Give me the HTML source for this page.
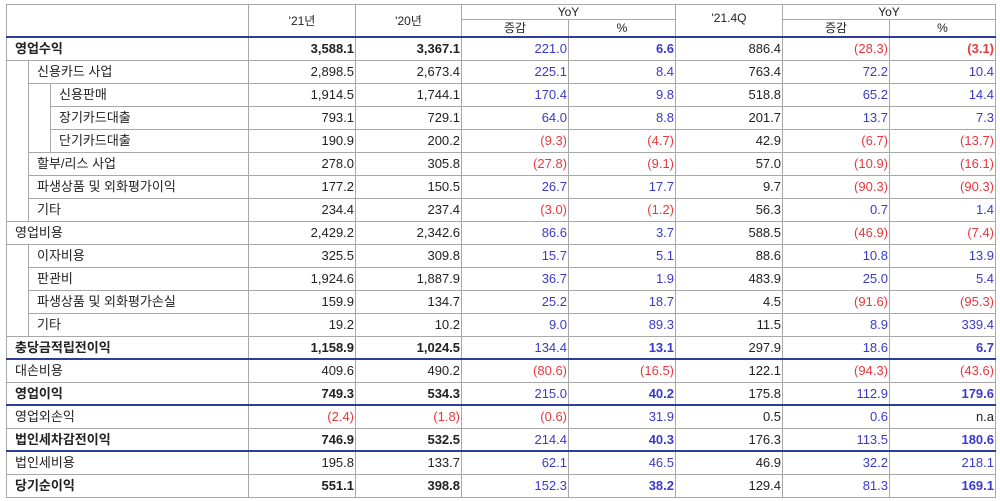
<!DOCTYPE html>
<html><head><meta charset="utf-8"><style>
body{margin:0;width:1000px;height:501px;background:#fff;font-family:"Liberation Sans","Noto Sans CJK KR",sans-serif;font-size:13px;color:#222;overflow:hidden}
table{position:absolute;left:6px;top:4px;border-collapse:collapse;table-layout:fixed;width:989px}
td{border:1px solid #a8a8a8;padding:0;height:22px;line-height:22px;white-space:nowrap;overflow:hidden}
td.n{text-align:right;padding-right:1px}
td.l{padding-left:8px}
.h td{height:14px;line-height:14px;text-align:center;font-size:12px}
.B{color:#3a3acc}.R{color:#e8383d}.b{font-weight:bold}
tr.bl td{border-bottom:2px solid #2d3d9a;height:21px;line-height:21px}
tr.h2 td{height:12px;line-height:16px;border-bottom:2px solid #2d3d9a}
</style></head><body>
<table>
<colgroup><col style="width:22px"><col style="width:22px"><col style="width:198px"><col style="width:107px"><col style="width:106px"><col style="width:107px"><col style="width:107px"><col style="width:107px"><col style="width:107px"><col style="width:106px"></colgroup>
<tr class="h"><td colspan="3" rowspan="2" style="border-bottom:2px solid #2d3d9a"></td><td rowspan="2" style="border-bottom:2px solid #2d3d9a">'21년</td><td rowspan="2" style="border-bottom:2px solid #2d3d9a">'20년</td><td colspan="2">YoY</td><td rowspan="2" style="border-bottom:2px solid #2d3d9a;vertical-align:top;padding-top:6px">'21.4Q</td><td colspan="2">YoY</td></tr>
<tr class="h h2"><td>증감</td><td>%</td><td>증감</td><td>%</td></tr>
<tr><td colspan="3" class="l b">영업수익</td><td class="n b">3,588.1</td><td class="n b">3,367.1</td><td class="n B">221.0</td><td class="n B b">6.6</td><td class="n">886.4</td><td class="n R">(28.3)</td><td class="n R b">(3.1)</td></tr>
<tr><td rowspan="7"></td><td colspan="2" class="l">신용카드 사업</td><td class="n">2,898.5</td><td class="n">2,673.4</td><td class="n B">225.1</td><td class="n B">8.4</td><td class="n">763.4</td><td class="n B">72.2</td><td class="n B">10.4</td></tr>
<tr><td rowspan="3"></td><td class="l">신용판매</td><td class="n">1,914.5</td><td class="n">1,744.1</td><td class="n B">170.4</td><td class="n B">9.8</td><td class="n">518.8</td><td class="n B">65.2</td><td class="n B">14.4</td></tr>
<tr><td class="l">장기카드대출</td><td class="n">793.1</td><td class="n">729.1</td><td class="n B">64.0</td><td class="n B">8.8</td><td class="n">201.7</td><td class="n B">13.7</td><td class="n B">7.3</td></tr>
<tr><td class="l">단기카드대출</td><td class="n">190.9</td><td class="n">200.2</td><td class="n R">(9.3)</td><td class="n R">(4.7)</td><td class="n">42.9</td><td class="n R">(6.7)</td><td class="n R">(13.7)</td></tr>
<tr><td colspan="2" class="l">할부/리스 사업</td><td class="n">278.0</td><td class="n">305.8</td><td class="n R">(27.8)</td><td class="n R">(9.1)</td><td class="n">57.0</td><td class="n R">(10.9)</td><td class="n R">(16.1)</td></tr>
<tr><td colspan="2" class="l">파생상품 및 외화평가이익</td><td class="n">177.2</td><td class="n">150.5</td><td class="n B">26.7</td><td class="n B">17.7</td><td class="n">9.7</td><td class="n R">(90.3)</td><td class="n R">(90.3)</td></tr>
<tr><td colspan="2" class="l">기타</td><td class="n">234.4</td><td class="n">237.4</td><td class="n R">(3.0)</td><td class="n R">(1.2)</td><td class="n">56.3</td><td class="n B">0.7</td><td class="n B">1.4</td></tr>
<tr><td colspan="3" class="l">영업비용</td><td class="n">2,429.2</td><td class="n">2,342.6</td><td class="n B">86.6</td><td class="n B">3.7</td><td class="n">588.5</td><td class="n R">(46.9)</td><td class="n R">(7.4)</td></tr>
<tr><td rowspan="4"></td><td colspan="2" class="l">이자비용</td><td class="n">325.5</td><td class="n">309.8</td><td class="n B">15.7</td><td class="n B">5.1</td><td class="n">88.6</td><td class="n B">10.8</td><td class="n B">13.9</td></tr>
<tr><td colspan="2" class="l">판관비</td><td class="n">1,924.6</td><td class="n">1,887.9</td><td class="n B">36.7</td><td class="n B">1.9</td><td class="n">483.9</td><td class="n B">25.0</td><td class="n B">5.4</td></tr>
<tr><td colspan="2" class="l">파생상품 및 외화평가손실</td><td class="n">159.9</td><td class="n">134.7</td><td class="n B">25.2</td><td class="n B">18.7</td><td class="n">4.5</td><td class="n R">(91.6)</td><td class="n R">(95.3)</td></tr>
<tr><td colspan="2" class="l">기타</td><td class="n">19.2</td><td class="n">10.2</td><td class="n B">9.0</td><td class="n B">89.3</td><td class="n">11.5</td><td class="n B">8.9</td><td class="n B">339.4</td></tr>
<tr class="bl"><td colspan="3" class="l b">충당금적립전이익</td><td class="n b">1,158.9</td><td class="n b">1,024.5</td><td class="n B">134.4</td><td class="n B b">13.1</td><td class="n">297.9</td><td class="n B">18.6</td><td class="n B b">6.7</td></tr>
<tr><td colspan="3" class="l">대손비용</td><td class="n">409.6</td><td class="n">490.2</td><td class="n R">(80.6)</td><td class="n R">(16.5)</td><td class="n">122.1</td><td class="n R">(94.3)</td><td class="n R">(43.6)</td></tr>
<tr class="bl"><td colspan="3" class="l b">영업이익</td><td class="n b">749.3</td><td class="n b">534.3</td><td class="n B">215.0</td><td class="n B b">40.2</td><td class="n">175.8</td><td class="n B">112.9</td><td class="n B b">179.6</td></tr>
<tr><td colspan="3" class="l">영업외손익</td><td class="n R">(2.4)</td><td class="n R">(1.8)</td><td class="n R">(0.6)</td><td class="n B">31.9</td><td class="n">0.5</td><td class="n B">0.6</td><td class="n">n.a</td></tr>
<tr class="bl"><td colspan="3" class="l b">법인세차감전이익</td><td class="n b">746.9</td><td class="n b">532.5</td><td class="n B">214.4</td><td class="n B b">40.3</td><td class="n">176.3</td><td class="n B">113.5</td><td class="n B b">180.6</td></tr>
<tr><td colspan="3" class="l">법인세비용</td><td class="n">195.8</td><td class="n">133.7</td><td class="n B">62.1</td><td class="n B">46.5</td><td class="n">46.9</td><td class="n B">32.2</td><td class="n B">218.1</td></tr>
<tr><td colspan="3" class="l b">당기순이익</td><td class="n b">551.1</td><td class="n b">398.8</td><td class="n B">152.3</td><td class="n B b">38.2</td><td class="n">129.4</td><td class="n B">81.3</td><td class="n B b">169.1</td></tr>
</table>
</body></html>
